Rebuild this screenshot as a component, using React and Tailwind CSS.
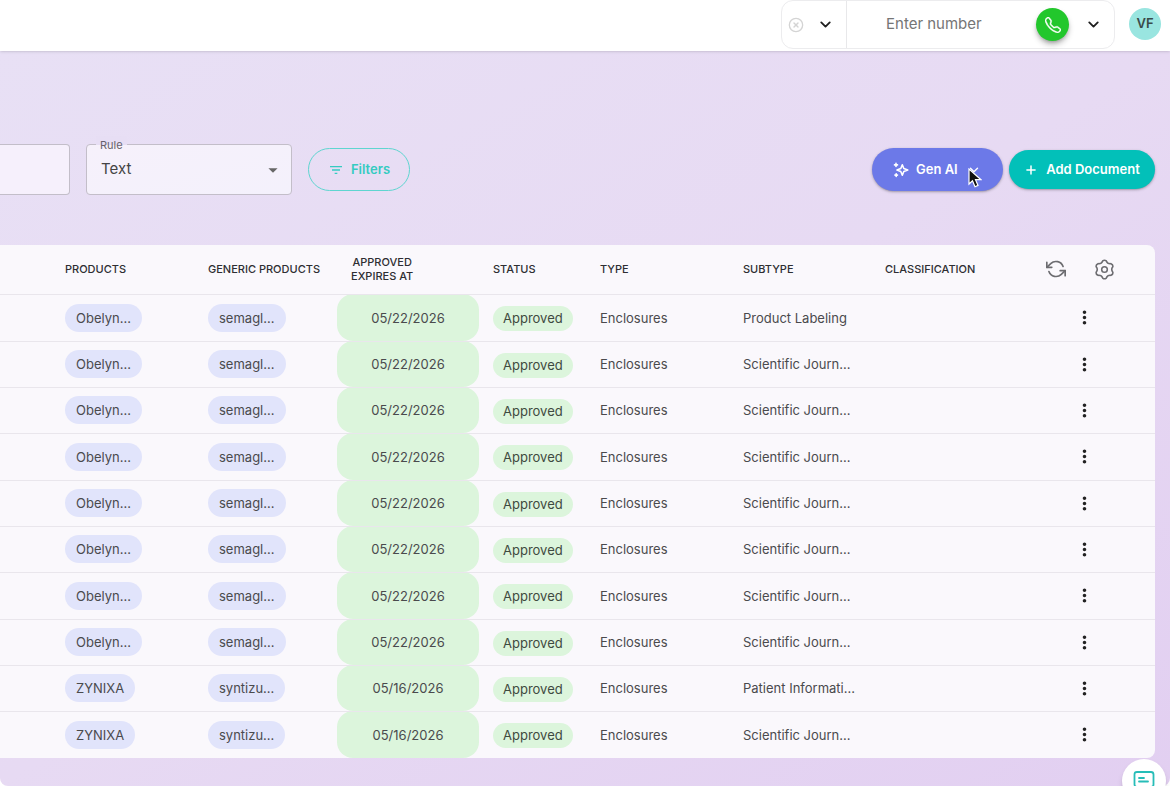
import { useState } from 'react';
import { ChevronDown, CircleX, Plus } from 'lucide-react';
import { BsTelephone } from 'react-icons/bs';
import { FiRefreshCcw } from 'react-icons/fi';
import { MdArrowDropDown, MdFilterList, MdMoreVert } from 'react-icons/md';

const documents = [
  { id: 1, product: 'Obelyn...', generic: 'semagl...', expires: '05/22/2026', subtype: 'Product Labeling' },
  { id: 2, product: 'Obelyn...', generic: 'semagl...', expires: '05/22/2026', subtype: 'Scientific Journ...' },
  { id: 3, product: 'Obelyn...', generic: 'semagl...', expires: '05/22/2026', subtype: 'Scientific Journ...' },
  { id: 4, product: 'Obelyn...', generic: 'semagl...', expires: '05/22/2026', subtype: 'Scientific Journ...' },
  { id: 5, product: 'Obelyn...', generic: 'semagl...', expires: '05/22/2026', subtype: 'Scientific Journ...' },
  { id: 6, product: 'Obelyn...', generic: 'semagl...', expires: '05/22/2026', subtype: 'Scientific Journ...' },
  { id: 7, product: 'Obelyn...', generic: 'semagl...', expires: '05/22/2026', subtype: 'Scientific Journ...' },
  { id: 8, product: 'Obelyn...', generic: 'semagl...', expires: '05/22/2026', subtype: 'Scientific Journ...' },
  { id: 9, product: 'ZYNIXA', generic: 'syntizu...', expires: '05/16/2026', subtype: 'Patient Informati...' },
  { id: 10, product: 'ZYNIXA', generic: 'syntizu...', expires: '05/16/2026', subtype: 'Scientific Journ...' },
];

const SparkleIcon = () => (
  <svg viewBox="0 0 16 16" className="w-4 h-4" fill="none" stroke="currentColor" strokeWidth="1.6" strokeLinejoin="round" strokeLinecap="round">
    <path d="M9.300 2.800 L10.800 6.500 L14.800 8 L10.800 9.500 L9.300 13.200 L7.800 9.500 L4 8 L7.800 6.500 Z" />
    <path d="M3 1.400v3M1.500 2.900h3" />
    <path d="M3.200 11.800v2.600M1.900 13.100h2.600" />
  </svg>
);

const GearIcon = () => (
  <svg viewBox="-12 -12 24 24" className="w-[21px] h-[21px]" fill="none" stroke="currentColor" strokeWidth="1.8" strokeLinejoin="round">
    <path d="M-2.080 -9.780Q0 -11.500 2.080 -9.780Q3.500 -6.060 7.430 -6.690Q9.960 -5.750 9.510 -3.090Q7 0 9.510 3.090Q9.960 5.750 7.430 6.690Q3.500 6.060 2.080 9.780Q0 11.500 -2.080 9.780Q-3.500 6.060 -7.430 6.690Q-9.960 5.750 -9.510 3.090Q-7 0 -9.510 -3.090Q-9.960 -5.750 -7.430 -6.690Q-3.500 -6.060 -2.080 -9.780Z" />
    <circle r="3.200" />
  </svg>
);

const ChatIcon = () => (
  <svg viewBox="0 0 22 22" className="w-[22px] h-[22px]" fill="none" stroke="currentColor" strokeWidth="1.8" strokeLinecap="round" strokeLinejoin="round">
    <path d="M4 2h14a2.500 2.500 0 0 1 2.500 2.500v10a2.500 2.500 0 0 1-2.500 2.500h-4l-3 3-3-3H4a2.500 2.500 0 0 1-2.500-2.500v-10A2.500 2.500 0 0 1 4 2z" />
    <path d="M6 8h5M6 11.500h9" />
  </svg>
);

const Pointer = () => (
  <svg viewBox="0 0 14 20" className="absolute left-24 top-5 w-3.5 h-5" aria-hidden="true">
    <path d="M1 1v15l3.500-3.300 2.500 6 3-1.300-2.500-5.700H13z" fill="#111" stroke="#fff" strokeWidth="1.2" />
  </svg>
);

function TopBar() {
  const [number, setNumber] = useState('');

  return (
    <header className="relative flex h-[51px] items-start justify-end bg-white pr-[9px] shadow-sm shadow-black/10">
      <div className="flex h-[49px] rounded-xl border border-[#ececee]">
        <div className="flex w-[65px] items-center justify-between border-r border-[#e8e8ea] pl-1.5 pr-3">
          <button aria-label="Clear caller" className="text-[#d4d4d4]">
            <CircleX size={16} strokeWidth={2} />
          </button>
          <button aria-label="Choose caller" className="text-[#1f1f1f]">
            <ChevronDown size={17} strokeWidth={2.6} />
          </button>
        </div>
        <div className="flex w-[267px] items-center pl-[39px] pr-3">
          <input
            aria-label="Phone number"
            placeholder="Enter number"
            value={number}
            onChange={(e) => setNumber(e.target.value)}
            className="min-w-0 flex-1 bg-transparent text-[15px] outline-none placeholder:text-[#757575]"
          />
          <button aria-label="Call" className="flex w-[33px] h-[33px] shrink-0 items-center justify-center rounded-full bg-[#22c72c] text-white shadow-md shadow-black/30">
            <BsTelephone size={16} stroke="currentColor" strokeWidth={0.5} />
          </button>
          <button aria-label="Call options" className="ml-4 text-[#1f1f1f]">
            <ChevronDown size={17} strokeWidth={2.6} />
          </button>
        </div>
      </div>
      <button className="ml-[14px] mt-2 flex w-8 h-8 items-center justify-center rounded-full bg-[#99e5e0] text-[13px] font-semibold text-[#3a4a4a]">
        VF
      </button>
    </header>
  );
}

function Toolbar() {
  const [search, setSearch] = useState('');

  return (
    <div className="flex items-center pr-[15px]">
      <input
        aria-label="Search documents"
        value={search}
        onChange={(e) => setSearch(e.target.value)}
        className="w-[70px] h-[51px] rounded-r border border-l-0 border-[#c3bec9] bg-[#f6f0fc] px-3 outline-none"
      />
      <div className="relative ml-4 w-[206px]">
        <label
          htmlFor="rule"
          className="absolute left-2.5 -top-2 bg-linear-to-b from-[#e7def4] from-50% to-[#f6f1fb] to-50% px-1 text-[11px] leading-[18px] text-[#66626b]"
        >
          Rule
        </label>
        <select
          id="rule"
          className="w-full h-[51px] appearance-none rounded border border-[#c3bec9] bg-linear-to-br from-[#f6f1fb] to-[#f4f1fc] px-3.5 text-[15px] text-[#444] outline-none"
        >
          <option>Text</option>
          <option>Title</option>
        </select>
        <MdArrowDropDown size={22} className="pointer-events-none absolute right-2 top-[15px] text-[#666]" />
      </div>
      <button className="ml-4 flex w-[102px] h-[43px] items-center justify-center gap-[7px] rounded-full border border-[#5fd5d0] text-[13px] font-semibold text-[#35cbc1]">
        <MdFilterList size={16} />
        Filters
      </button>
      <div className="ml-auto flex items-center gap-1.5">
        <button className="relative flex w-[131px] h-[43px] items-center gap-[7px] rounded-full bg-[#6c79e8] pl-[21px] text-[13px] font-semibold text-white shadow-sm shadow-black/25">
          <SparkleIcon />
          Gen AI
          <ChevronDown size={14} strokeWidth={2.4} className="ml-0.5" />
          <Pointer />
        </button>
        <button className="flex w-[146px] h-[39px] items-center justify-center gap-2 rounded-full bg-[#02c0b9] text-[13px] font-semibold text-white shadow-sm shadow-black/25">
          <Plus size={14} strokeWidth={2.6} />
          Add Document
        </button>
      </div>
    </div>
  );
}

function DocumentTable() {
  return (
    <div className="mr-[15px] overflow-hidden rounded-r-lg bg-[#faf8fc]">
      <table className="w-full table-fixed text-left text-[13px] text-[#4a4a4d]">
        <colgroup>
          <col />
          <col className="w-[143px]" />
          <col className="w-[143px]" />
          <col className="w-[142px]" />
          <col className="w-[107px]" />
          <col className="w-[143px]" />
          <col className="w-[142px]" />
          <col className="w-[142px]" />
          <col className="w-[142px]" />
        </colgroup>
        <thead>
          <tr className="h-[49px] text-[11px] leading-[14px] uppercase text-[#2e2e32]">
            <th aria-label="Name" />
            <th className="px-3.5 font-medium">Products</th>
            <th className="px-3.5 font-medium whitespace-nowrap">Generic Products</th>
            <th className="px-3.5 font-medium">
              <span className="inline-block text-center">
                Approved
                <br />
                Expires At
              </span>
            </th>
            <th className="px-3.5 font-medium">Status</th>
            <th className="px-3.5 font-medium">Type</th>
            <th className="px-3.5 font-medium">Subtype</th>
            <th className="px-3.5 font-medium">Classification</th>
            <th>
              <div className="flex items-center justify-center gap-7 pr-2 text-[#6c6c70]">
                <button aria-label="Refresh">
                  <FiRefreshCcw size={20} />
                </button>
                <button aria-label="Table settings">
                  <GearIcon />
                </button>
              </div>
            </th>
          </tr>
        </thead>
        <tbody>
          {documents.map((doc) => (
            <tr key={doc.id} className="h-[46px] nth-[3n+1]:h-[47px] border-t border-[#e9e6ec]">
              <td />
              <td className="px-3.5">
                <span className="inline-block rounded-full bg-[#e1e4fb] px-[11px] leading-7">{doc.product}</span>
              </td>
              <td className="px-3.5">
                <span className="inline-block rounded-full bg-[#e1e4fb] px-[11px] leading-7">{doc.generic}</span>
              </td>
              <td className="rounded-2xl bg-[#dcf5dc] pt-0.5 text-center">{doc.expires}</td>
              <td className="px-3.5 pt-0.5">
                <span className="inline-block rounded-full bg-[#dcf5dc] px-2.5 leading-[25px] text-[#3f4a40]">Approved</span>
              </td>
              <td className="px-3.5 pt-0.5">Enclosures</td>
              <td className="px-3.5 pt-0.5 whitespace-nowrap">{doc.subtype}</td>
              <td />
              <td>
                <button aria-label="Document actions" className="mx-auto block text-[#222]">
                  <MdMoreVert size={21} />
                </button>
              </td>
            </tr>
          ))}
        </tbody>
      </table>
    </div>
  );
}

export default function App() {
  return (
    <div className="flex min-h-screen flex-col overflow-hidden bg-white font-['Inter',sans-serif]">
      <TopBar />
      <main className="flex flex-1 flex-col gap-[50px] rounded-b-lg bg-linear-to-br from-[#e8e0f5] via-[#e7daf3] to-[#e2cff1] pt-[93px] pb-[27px]">
        <Toolbar />
        <DocumentTable />
      </main>
      <button
        aria-label="Open chat"
        className="fixed -bottom-[17px] right-1 flex w-11 h-11 items-center justify-center rounded-full bg-white text-[#27bdb8] shadow-md shadow-black/15"
      >
        <ChatIcon />
      </button>
    </div>
  );
}
